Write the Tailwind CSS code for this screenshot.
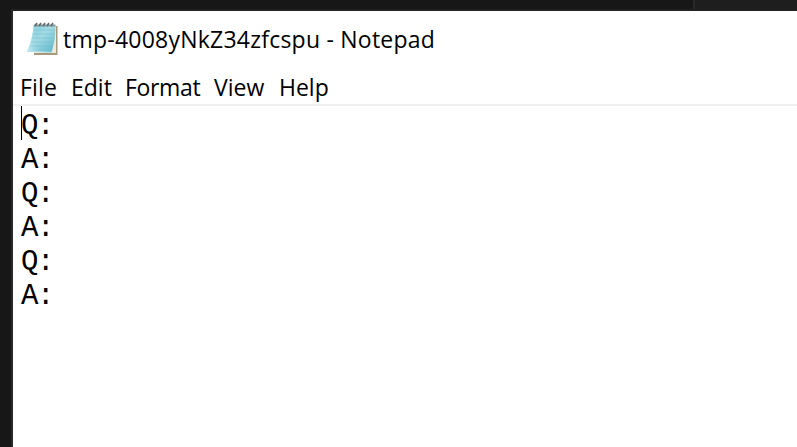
<!DOCTYPE html>
<html lang="en">
<head>
<meta charset="utf-8">
<title>Notepad</title>
<script src="https://cdn.jsdelivr.net/npm/@tailwindcss/browser@4"></script>
</head>
<body class="w-[797px] h-[447px] overflow-hidden bg-[#171717] flex flex-col text-black font-['Open_Sans',sans-serif]">
<div class="h-[11px] shrink-0 flex bg-[#171717]">
  <div class="w-[693px]"></div>
  <div class="w-[2px] bg-[#292929]"></div>
  <div class="flex-1 bg-[#1e1e1e]"></div>
</div>
<div class="flex flex-1 -mt-[2px]">
  <div class="w-[11px] shrink-0"></div>
  <main class="flex-1 border-l-2 border-t-2 border-l-[#292929] border-t-[#222021] bg-white flex flex-col">
    <header class="h-[58px] flex items-center pl-[13px]">
      <svg class="w-[34px] h-[36px] shrink-0 -mt-[3px]" viewBox="0 0 34 36">
        <defs>
          <linearGradient id="paper" x1="0" y1="0" x2="1" y2="1"><stop offset="0" stop-color="#83cbd9"/><stop offset=".45" stop-color="#a5dbe5"/><stop offset="1" stop-color="#58b4c9"/></linearGradient>
          <linearGradient id="curl" x1="0" y1="0" x2="1" y2="0"><stop offset="0" stop-color="#c7f0f5"/><stop offset="1" stop-color="#7bc6d5" stop-opacity="0"/></linearGradient>
        </defs>
        <path d="M9 5H31.5V34H8V31Z" fill="#a6997b"/>
        <path d="M8 5H30V32H8Z" fill="#eee9d6"/>
        <path d="M7.5 4.5H29.5C29.5 15 28 24 25.5 31.5L1 30.5C4 24 7 15 7.5 4.5Z" fill="url(#paper)"/>
        <path d="M7.5 4.5H16L11 31L1 30.5C4 24 7 15 7.5 4.5Z" fill="url(#curl)"/>
        <path d="M8 9H29M7 13H28.5M6 17H28M5 21H27M4 25H27" stroke="#6cbccc" stroke-width=".7" opacity=".65"/>
        <path d="M1 30.3L25.5 31.3" stroke="#b5e4ec"/>
        <path d="M8 4.5H29.5" stroke="#83999c" stroke-width="2"/>
        <path d="M9 5L11 2M13 5L15 2M17 5L19 2M21 5L23 2M25 5L27 2" stroke="#636b70" stroke-width="1.7"/>
      </svg>
      <h1 class="ml-[3px] -mt-[2px] text-[23px] leading-[32px] whitespace-nowrap tracking-[0.23px]">tmp-4008yNkZ34zfcspu - Notepad</h1>
    </header>
    <nav class="h-[37px] border-b-2 border-[#f0f0f0] flex items-center pl-[7px] text-[23px] leading-[32px] whitespace-nowrap">
      <span class="w-[51px] tracking-[0.2px]">File</span><span class="w-[54px]">Edit</span><span class="w-[89px] tracking-[-0.35px]">Format</span><span class="w-[65px]">View</span><span>Help</span>
    </nav>
    <section class="relative pl-[8px] pt-[4px] font-['Liberation_Mono',monospace] text-[29px] leading-[34px] tracking-[-1.4px]">
      <i class="absolute left-[8px] top-0 w-px h-[34px] bg-black"></i>
      <p>Q:</p><p>A:</p><p>Q:</p><p>A:</p><p>Q:</p><p>A:</p>
    </section>
  </main>
</div>
</body>
</html>
